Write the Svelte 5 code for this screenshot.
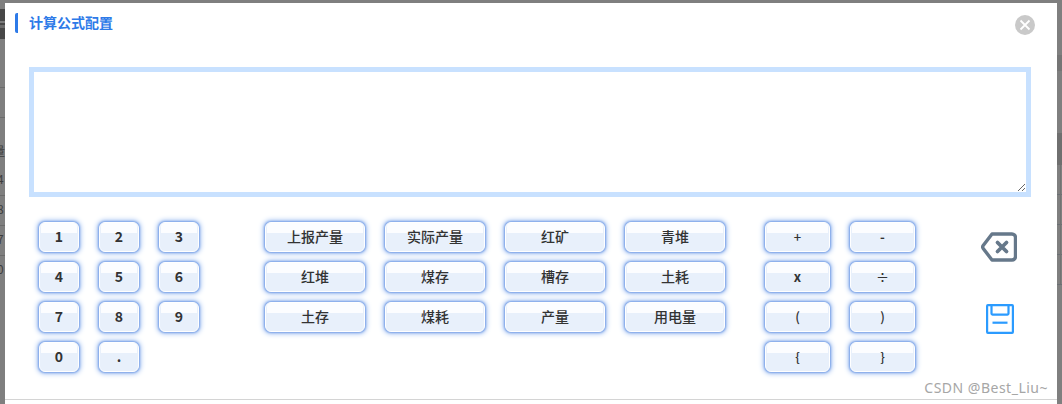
<script>
  const digits = ['1','2','3','4','5','6','7','8','9','0','.'];
  const names = ['上报产量','实际产量','红矿','青堆','红堆','煤存','槽存','土耗','土存','煤耗','产量','用电量'];
  const ops = ['+','-','x','÷','(',')','{','}'];
</script>

<div class="page">
  <div class="under">
    <span class="block dark"></span>
    <span class="block dark-line"></span>
    <span class="block dark-line two"></span>
    <span class="rule r1"></span>
    <span class="rule r2"></span>
    <span class="rule r3"></span>
    <span class="rule r4"></span>
    <span class="rule r5"></span>
    <span class="block right-a"></span>
    <span class="block right-b"></span>
    <span class="rrule q1"></span>
    <span class="rrule q2"></span>
    <span class="rrule q3"></span>
    <span class="rrule q4"></span>
    <span class="rcol"></span>
    <span class="frag f1">量</span>
    <span class="frag f2">4</span>
    <span class="frag f3">8</span>
    <span class="frag f4">7</span>
    <span class="frag f5">0</span>
  </div>
  <section class="modal">
    <header class="head">
      <h2 class="title">计算公式配置</h2>
      <button class="close" aria-label="关闭">
        <svg viewBox="0 0 20 20" width="20" height="20"><circle cx="10" cy="10" r="10" fill="#c9c9c9"/><path d="M5.500 5.500l9 9M14.500 5.500l-9 9" stroke="#fff" stroke-width="1.800" fill="none"/></svg>
      </button>
    </header>
    <textarea class="formula"></textarea>
    <div class="pad">
      <div class="keys digits">
        {#each digits as d}<button class="key"><span>{d}</span></button>{/each}
      </div>
      <div class="keys names">
        {#each names as d}<button class="key name"><span>{d}</span></button>{/each}
      </div>
      <div class="keys ops">
        {#each ops as d}<button class="key op" class:strong={d === '-' || d === 'x'}><span>{d}</span></button>{/each}
      </div>
      <div class="actions">
        <svg class="del" viewBox="0 0 36 30" width="36" height="30" fill="none" stroke="#66788a" stroke-width="3.400" stroke-linejoin="round" stroke-linecap="round">
          <path d="M11 2h20a3.500 3.500 0 0 1 3.500 3.500v19a3.500 3.500 0 0 1-3.500 3.500H11L2.200 16.500a2.500 2.500 0 0 1 0-3z"/>
          <path d="M16.500 10.500l9 9M25.500 10.500l-9 9" stroke-width="3.800"/>
        </svg>
        <svg class="save" viewBox="0 0 28 30" width="28" height="30" fill="none" stroke="#2b9bff" stroke-width="2.200" stroke-linejoin="round">
          <path d="M2 1.100h24a1 1 0 0 1 .9 1v25.800a1 1 0 0 1-.9 1H2a1 1 0 0 1-.9-1V2.100a1 1 0 0 1 .9-1z"/>
          <path d="M5.500 1.100v8.500a1 1 0 0 0 1 1h15a1 1 0 0 0 1-1V1.100"/>
          <path d="M6.500 18.700h15"/>
        </svg>
      </div>
    </div>
    <footer class="foot"></footer>
    <div class="mark">CSDN @Best_Liu~</div>
  </section>
</div>

<style>
  :global(body) { margin: 0; }
  .page {
    position: relative;
    width: 1062px;
    height: 404px;
    overflow: hidden;
    background: #7f7f7f;
    font-family: "Noto Sans CJK SC", "Liberation Sans", sans-serif;
  }
  .under { position: absolute; inset: 0; }
  .block { position: absolute; }
  .dark { left: 0; top: 9px; width: 5px; height: 30px; background: #474747; }
  .dark-line { left: 0; top: 21px; width: 5px; height: 2px; background: #7a7a7a; }
  .dark-line.two { top: 25px; height: 3px; background: #6a6a6a; }
  .rule { position: absolute; left: 0; width: 5px; height: 1px; background: #6b6b6b; }
  .r1 { top: 87px; }
  .r2 { top: 117px; }
  .r3 { top: 195px; }
  .r4 { top: 225px; }
  .r5 { top: 255px; }
  .right-a { right: 0; top: 55px; width: 5px; height: 16px; background: #757575; }
  .right-b { right: 0; top: 133px; width: 5px; height: 32px; background: #6f6f6f; }
  .rrule { position: absolute; right: 0; width: 5px; height: 1px; background: #6a6f74; }
  .q1 { top: 194px; }
  .q2 { top: 224px; }
  .q3 { top: 254px; }
  .q4 { top: 284px; }
  .rcol { position: absolute; right: 1px; top: 165px; width: 1px; height: 119px; background: #727272; }
  .frag { position: absolute; left: -3px; font-size: 12px; color: #3d3d3d; line-height: 14px; }
  .f1 { top: 144px; left: -7px; }
  .f2 { top: 172px; }
  .f3 { top: 202px; }
  .f4 { top: 232px; }
  .f5 { top: 262px; }
  .modal {
    position: absolute;
    left: 5px;
    top: 3px;
    width: 1052px;
    height: 401px;
    background: #fff;
    box-sizing: border-box;
  }
  .head {
    display: flex;
    align-items: flex-start;
    justify-content: space-between;
    height: 64px;
    padding: 10px 32px 0 10px;
    box-sizing: border-box;
  }
  .title {
    margin: 0;
    height: 20px;
    border-left: 3px solid #2d7ae8;
    border-radius: 2px 0 0 2px;
    padding-left: 11px;
    font-size: 14px;
    font-weight: 700;
    line-height: 19px;
    color: #2d7ae8;
  }
  .close { border: 0; padding: 0; background: none; height: 20px; margin-top: 2px; margin-right: -10px; }
  .formula {
    display: block;
    width: 1002px;
    height: 130px;
    margin: 0 0 0 24px;
    box-sizing: border-box;
    border: 5px solid #c8e1ff;
    outline: 0;
    border-radius: 0;
    background: #fff;
  }
  .pad {
    display: flex;
    align-items: flex-start;
    margin-top: 25px;
    padding-left: 34px;
  }
  .keys { display: grid; grid-auto-rows: 30px; row-gap: 10px; }
  .digits { grid-template-columns: repeat(3, 40px); column-gap: 20px; width: 160px; font-size: 14px; }
  .names { grid-template-columns: repeat(4, 100px); column-gap: 20px; margin-left: 66px; }
  .ops { grid-template-columns: repeat(2, 65px); column-gap: 20px; margin-left: 40px; }
  .key {
    position: relative;
    padding: 0;
    border: 1px solid #fff;
    border-radius: 6px;
    background: #e8f0fb;
    box-shadow: 0 0 2px 1px #7da4e8, 0 0 5px 2px #aac6f2;
    font-family: inherit;
    font-size: 14px;
    font-weight: 700;
    color: #333;
  }
  .key::before {
    content: "";
    position: absolute;
    left: 1px;
    right: 1px;
    top: 0;
    height: 10px;
    background: #fcfdff;
    border-radius: 4px 4px 0 0;
  }
  .key span { position: relative; top: -1px; }
  .name { font-weight: 500; }
  .op { font-weight: 500; font-size: 13px; }
  .op.strong { font-weight: 700; }
  .actions {
    display: flex;
    flex-direction: column;
    align-items: center;
    width: 36px;
    margin-left: 66px;
    padding-top: 10px;
    row-gap: 42px;
  }
  .del { display: block; }
  .save { display: block; margin-left: 2px; }
  .foot {
    position: absolute;
    left: 0;
    right: 0;
    top: 396px;
    height: 1px;
    background: #d4d4d4;
  }
  .mark {
    position: absolute;
    right: 9px;
    top: 377px;
    font-family: "Noto Sans", sans-serif;
    font-size: 14px;
    line-height: 16px;
    color: #a6a6a6;
    letter-spacing: 0.5px;
  }
</style>
